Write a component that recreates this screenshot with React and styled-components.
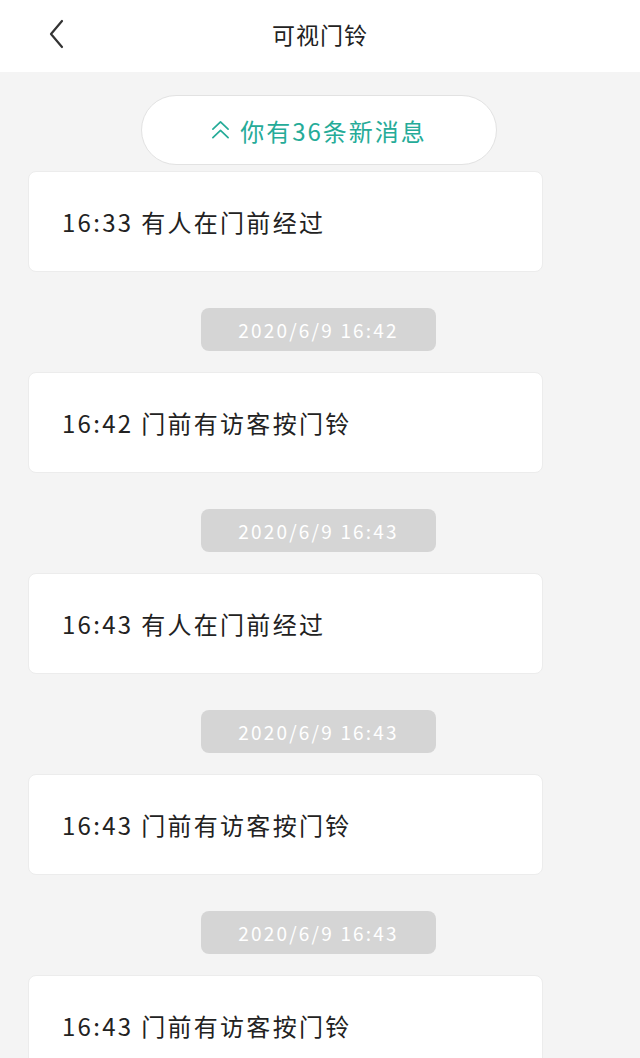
import React from "react";
import styled, { createGlobalStyle } from "styled-components";

const Global = createGlobalStyle`
  html, body { margin: 0; padding: 0; background: #f4f4f4; }
  body { font-family: "Noto Sans CJK SC", "Noto Sans", sans-serif; }
  * { box-sizing: border-box; }
`;

const Page = styled.div`
  width: 640px;
  height: 1058px;
  overflow: hidden;
  background: #f4f4f4;
`;

const Header = styled.header`
  height: 72px;
  background: #ffffff;
  position: relative;
  display: flex;
  align-items: center;
  justify-content: center;
`;

const BackButton = styled.button`
  position: absolute;
  left: 40px;
  top: 16px;
  width: 34px;
  height: 36px;
  border: none;
  background: transparent;
  padding: 0;
  display: flex;
  align-items: center;
  justify-content: center;
`;

const Title = styled.h1`
  margin: 0;
  font-size: 23px;
  font-weight: 400;
  color: #222;
  letter-spacing: 1px;
  transform: translateY(-2px);
`;

const Feed = styled.main`
  display: flex;
  flex-direction: column;
  align-items: flex-start;
  padding: 23px 0 0 28px;
`;

const NewPill = styled.div`
  align-self: flex-start;
  margin-left: 113px;
  width: 356px;
  height: 70px;
  border-radius: 35px;
  background: #fff;
  border: 1px solid #e2e2e2;
  display: flex;
  align-items: center;
  justify-content: center;
  gap: 10px;
  color: #25ab98;
  font-size: 24px;
  letter-spacing: 2px;
`;

const Card = styled.div`
  width: 515px;
  height: 101px;
  margin-top: ${(p) => p.$top}px;
  background: #fff;
  border: 1px solid #ececec;
  border-radius: 8px;
  display: flex;
  align-items: center;
  padding-left: 33px;
  font-size: 24px;
  letter-spacing: 2.3px;
  color: #222;
`;

const Stamp = styled.div`
  margin-top: 36px;
  margin-left: 173px;
  width: 235px;
  height: 43px;
  border-radius: 8px;
  background: #d5d5d5;
  color: #fff;
  font-size: 19px;
  display: flex;
  align-items: center;
  justify-content: center;
  letter-spacing: 2.2px;
`;

const Chevrons = () => (
  <svg width="19" height="20" viewBox="0 0 20 20" fill="none" stroke="#25ab98" strokeWidth="1.8" strokeLinecap="round" strokeLinejoin="round">
    <path d="M2 9 L10 1.5 L18 9" />
    <path d="M2 18 L10 10.5 L18 18" />
  </svg>
);

const items = [
  { text: "16:33 有人在门前经过", stamp: "2020/6/9 16:42" },
  { text: "16:42 门前有访客按门铃", stamp: "2020/6/9 16:43" },
  { text: "16:43 有人在门前经过", stamp: "2020/6/9 16:43" },
  { text: "16:43 门前有访客按门铃", stamp: "2020/6/9 16:43" },
  { text: "16:43 门前有访客按门铃", stamp: null },
];

export default function App() {
  return (
    <Page>
      <Global />
      <Header>
        <BackButton aria-label="back">
          <svg width="20" height="30" viewBox="0 0 20 30" fill="none" stroke="#333" strokeWidth="2.2" strokeLinecap="round" strokeLinejoin="round">
            <path d="M15 2 L4 15 L15 28" />
          </svg>
        </BackButton>
        <Title>可视门铃</Title>
      </Header>
      <Feed>
        <NewPill>
          <Chevrons />
          <span>你有36条新消息</span>
        </NewPill>
        {items.map((it, i) => (
          <React.Fragment key={i}>
            <Card $top={i === 0 ? 6 : 21}>{it.text}</Card>
            {it.stamp && <Stamp>{it.stamp}</Stamp>}
          </React.Fragment>
        ))}
      </Feed>
    </Page>
  );
}
